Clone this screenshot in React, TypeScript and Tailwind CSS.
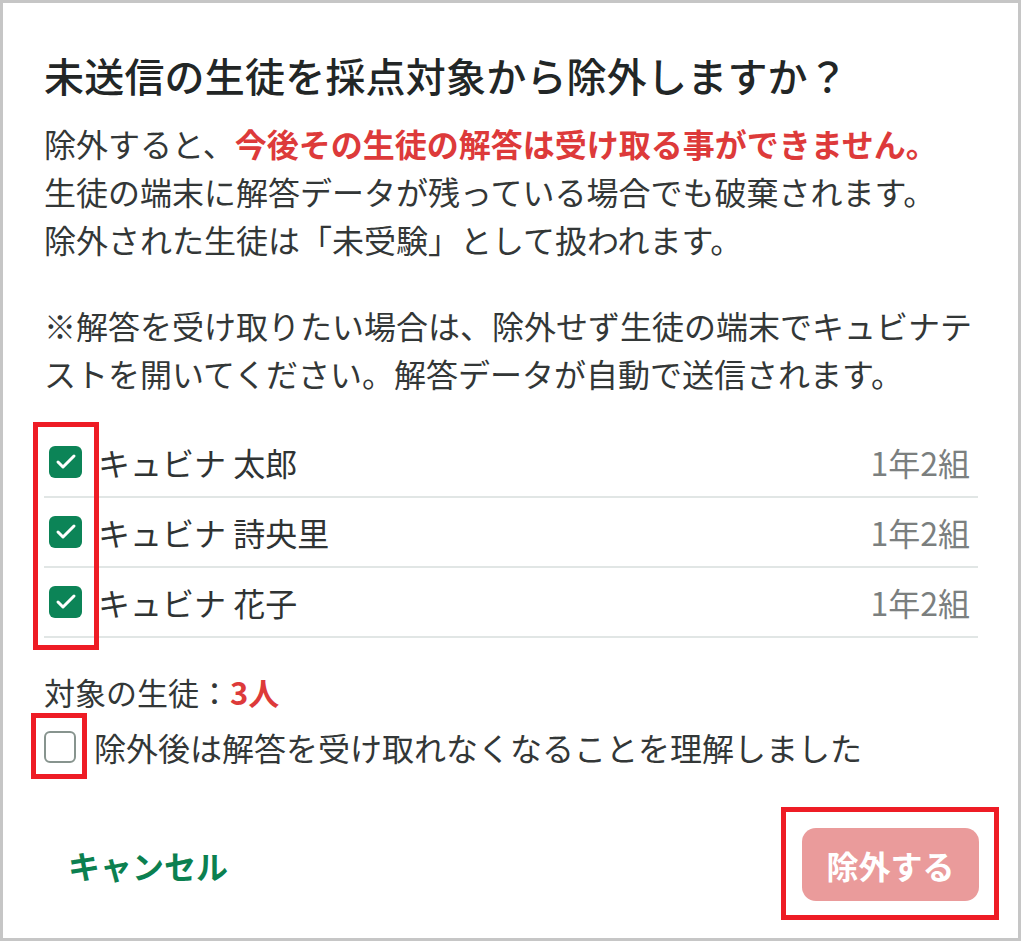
import { Check } from 'lucide-react';

interface Student {
  id: string;
  name: string;
  className: string;
}

const students: Student[] = [
  { id: '1', name: 'キュビナ 太郎', className: '1年2組' },
  { id: '2', name: 'キュビナ 詩央里', className: '1年2組' },
  { id: '3', name: 'キュビナ 花子', className: '1年2組' },
];

export default function App() {
  return (
    <div
      className="w-[1024px] h-[945px] bg-white"
      style={{ fontFamily: '"Noto Sans CJK JP", "Noto Sans", sans-serif' }}
    >
      <div className="relative w-[1021px] h-[941px] border-[3px] border-[#c6c6c6] px-[41px] pt-[44px] text-[#2b2f2f]">
        <h1 className="text-[40px] leading-[56px] font-medium text-[#222626] tracking-[0.2px]">
          未送信の生徒を採点対象から除外しますか？
        </h1>

        <div className="mt-[16px] text-[32px] leading-[48px] text-[#333737]">
          <p>
            除外すると、
            <span className="font-bold text-[#dd3a3a]">今後その生徒の解答は受け取る事ができません。</span>
          </p>
          <p>生徒の端末に解答データが残っている場合でも破棄されます。</p>
          <p>除外された生徒は「未受験」として扱われます。</p>
        </div>

        <p className="mt-[38px] text-[32px] leading-[48px] text-[#333737]">
          ※解答を受け取りたい場合は、除外せず生徒の端末でキュビナテストを開いてください。解答データが自動で送信されます。
        </p>

        {/* Student list */}
        <div className="mt-[31px] mr-[-1px]">
          {students.map((s) => (
            <div
              key={s.id}
              className="flex items-center h-[70px] border-b-2 border-[#e1e6e5]"
            >
              <div className="ml-[5px] w-[33px] h-[32px] rounded-[6px] bg-[#0c8457] flex items-center justify-center">
                <Check className="w-[24px] h-[24px] text-white" strokeWidth={3} />
              </div>
              <span className="ml-[16px] text-[32px] text-[#2f3333]">{s.name}</span>
              <span className="ml-auto mr-[8px] text-[32px] text-[#7b7f7f]">{s.className}</span>
            </div>
          ))}
        </div>

        <p className="mt-[30px] text-[31px] leading-[48px] text-[#333737]">
          対象の生徒：<span className="font-bold text-[#dd3a3a]">3人</span>
        </p>

        <label className="mt-[7px] flex items-center h-[48px]">
          <span className="w-[32px] h-[32px] rounded-[6px] border-2 border-[#87948e] bg-white" />
          <span className="ml-[18px] text-[32px] text-[#333737]">
            除外後は解答を受け取れなくなることを理解しました
          </span>
        </label>

        <div className="mt-[57px] mr-[-2px] flex items-center justify-between">
          <button className="ml-[24px] text-[32px] font-bold text-[#0b8050]">キャンセル</button>
          <button
            disabled
            className="w-[177px] h-[73px] rounded-[14px] bg-[#ea9b9b] text-[32px] font-bold text-white"
          >
            除外する
          </button>
        </div>

        {/* annotation frames */}
        <div className="absolute left-[30px] top-[419px] w-[66px] h-[228px] border-[5px] border-[#ee1c25]" />
        <div className="absolute left-[28px] top-[710px] w-[56px] h-[66px] border-[5px] border-[#ee1c25]" />
        <div className="absolute left-[778px] top-[804px] w-[218px] h-[113px] border-[5px] border-[#ee1c25]" />
      </div>
    </div>
  );
}
